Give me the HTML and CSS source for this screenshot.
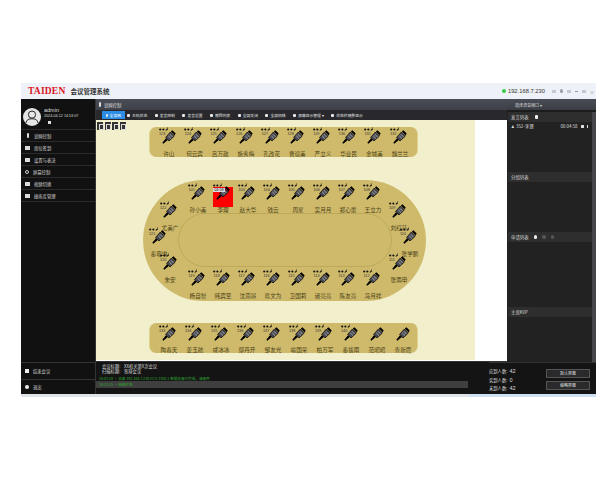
FILE: index.html
```html
<!DOCTYPE html>
<html lang="zh">
<head>
<meta charset="utf-8">
<title>会议管理系统</title>
<link rel="stylesheet" href="styles.css">
</head>
<body>
<svg class="defs" width="0" height="0">
  <defs>
    <g id="mic">
      <path d="M0.3 12.7 L4 8.2 L5.8 10 L1.3 13.7 Z" fill="#000"/>
      <path d="M3.6 7.4 L8.4 2 L12.4 6 L7 11 Z" fill="#4a4a52" stroke="#000" stroke-width="0.7"/>
      <path d="M8.8 1.6 L10.4 0.3 L13.7 3.6 L12.6 5.2 Z" fill="#000"/>
      <path d="M6.2 5.8 L9 8.6 M7.8 4.2 L10.6 7" stroke="#b8b8c0" stroke-width="0.8"/>
    </g>
    <g id="stat">
      <circle cx="1.3" cy="2.8" r="1.2" fill="#111"/>
      <circle cx="4.8" cy="2.8" r="1.2" fill="#111"/>
      <path d="M7 4 L9 1.5 L10 2.5 L8.5 4 Z M9 0.5 h0.8 v0.8 h-0.8 Z" fill="#111"/>
    </g>
  </defs>
</svg>
<div class="app">
  <header class="titlebar">
    <span class="brand">TAIDEN</span>
    <span class="apptitle">会议管理系统</span>
    <span class="spacer"></span>
    <span class="online"></span>
    <span class="ip">192.168.7.230</span>
    <span class="winctl"><i class="wi sq"></i><i class="wi dot"></i><i class="wi sq"></i><i class="wi dash"></i><i class="wi sq"></i><i class="wi x">×</i></span>
  </header>
  <div class="main">
    <aside class="sidebar">
      <div class="user">
        <svg class="avatar" viewBox="0 0 18 18" width="18" height="18">
          <circle cx="9" cy="9" r="9" fill="#e6e6e6"/>
          <circle cx="9" cy="6.6" r="3.6" fill="#e6e6e6" stroke="#111" stroke-width="0.9"/>
          <path d="M2.8 15.5 C3.5 11.5 6 10.8 9 10.8 C12 10.8 14.5 11.5 15.2 15.5" fill="none" stroke="#111" stroke-width="0.9"/>
        </svg>
        <div class="userinfo">
          <div class="uname">admin</div>
          <div class="utime">2024-04-12 14:53:07</div>
          <div class="ulock"></div>
        </div>
      </div>
      <nav class="menu">
        <div class="mi"><i class="mico narrow"></i>说网控制</div>
        <div class="mi"><i class="mico"></i>席位签到</div>
        <div class="mi"><i class="mico"></i>设置与表决</div>
        <div class="mi"><i class="mico round"></i>屏幕控制</div>
        <div class="mi"><i class="mico"></i>视频切换</div>
        <div class="mi"><i class="mico"></i>操练库管理</div>
      </nav>
      <div class="sidefoot">
        <div class="fi"><i class="fico"></i>结束会议</div>
        <div class="fi"><i class="fico round"></i>退出</div>
      </div>
    </aside>
    <div class="center">
      <div class="crumb"><i class="mico narrow"></i>说网控制</div>
      <div class="toolbar">
        <span class="tb active"><i class="ti"></i>全部图</span>
        <span class="tb"><i class="ti"></i>主机状态</span>
        <span class="tb"><i class="ti"></i>发言控制</span>
        <span class="tb"><i class="ti"></i>发言设置</span>
        <span class="tb"><i class="ti"></i>撤回列表</span>
        <span class="tb"><i class="ti"></i>全部关闭</span>
        <span class="tb"><i class="ti"></i>全部招核</span>
        <span class="tb"><i class="ti"></i>屏幕显示管理 ▾</span>
        <span class="tb"><i class="ti"></i>状态栏随影显示</span>
      </div>
      <div class="canvas">
        <div class="board">
          <div class="tools"><i></i><i></i><i></i><i></i></div>

          <div class="table table-top">
            <div class="seat"><svg class="st" viewBox="0 0 11 5"><use href="#stat"/></svg><span class="num">123</span><svg class="m" viewBox="0 0 14 14"><use href="#mic"/></svg><span class="nm">许山</span></div>
            <div class="seat"><svg class="st" viewBox="0 0 11 5"><use href="#stat"/></svg><span class="num">124</span><svg class="m" viewBox="0 0 14 14"><use href="#mic"/></svg><span class="nm">何云宾</span></div>
            <div class="seat"><svg class="st" viewBox="0 0 11 5"><use href="#stat"/></svg><span class="num">125</span><svg class="m" viewBox="0 0 14 14"><use href="#mic"/></svg><span class="nm">吕万政</span></div>
            <div class="seat"><svg class="st" viewBox="0 0 11 5"><use href="#stat"/></svg><span class="num">126</span><svg class="m" viewBox="0 0 14 14"><use href="#mic"/></svg><span class="nm">施秀梅</span></div>
            <div class="seat"><svg class="st" viewBox="0 0 11 5"><use href="#stat"/></svg><span class="num">127</span><svg class="m" viewBox="0 0 14 14"><use href="#mic"/></svg><span class="nm">孔改花</span></div>
            <div class="seat"><svg class="st" viewBox="0 0 11 5"><use href="#stat"/></svg><span class="num">128</span><svg class="m" viewBox="0 0 14 14"><use href="#mic"/></svg><span class="nm">曹谊美</span></div>
            <div class="seat"><svg class="st" viewBox="0 0 11 5"><use href="#stat"/></svg><span class="num">129</span><svg class="m" viewBox="0 0 14 14"><use href="#mic"/></svg><span class="nm">严立义</span></div>
            <div class="seat"><svg class="st" viewBox="0 0 11 5"><use href="#stat"/></svg><span class="num">130</span><svg class="m" viewBox="0 0 14 14"><use href="#mic"/></svg><span class="nm">华业民</span></div>
            <div class="seat"><svg class="st" viewBox="0 0 11 5"><use href="#stat"/></svg><span class="num">131</span><svg class="m" viewBox="0 0 14 14"><use href="#mic"/></svg><span class="nm">金城美</span></div>
            <div class="seat"><svg class="st" viewBox="0 0 11 5"><use href="#stat"/></svg><span class="num">132</span><svg class="m" viewBox="0 0 14 14"><use href="#mic"/></svg><span class="nm">魏兰兰</span></div>
          </div>

          <div class="oval">
            <div class="inner"></div>
            <div class="row">
              <div class="seat"><svg class="st" viewBox="0 0 11 5"><use href="#stat"/></svg><span class="num">101</span><svg class="m" viewBox="0 0 14 14"><use href="#mic"/></svg><span class="nm">孙小美</span></div>
              <div class="seat seat-on"><svg class="st" viewBox="0 0 11 5"><use href="#stat"/></svg><span class="num">102</span><svg class="m" viewBox="0 0 14 14"><use href="#mic"/></svg><span class="timer">04:58</span><span class="nm">李理</span></div>
              <div class="seat"><svg class="st" viewBox="0 0 11 5"><use href="#stat"/></svg><span class="num">103</span><svg class="m" viewBox="0 0 14 14"><use href="#mic"/></svg><span class="nm">赵大华</span></div>
              <div class="seat"><svg class="st" viewBox="0 0 11 5"><use href="#stat"/></svg><span class="num">104</span><svg class="m" viewBox="0 0 14 14"><use href="#mic"/></svg><span class="nm">钱云</span></div>
              <div class="seat"><svg class="st" viewBox="0 0 11 5"><use href="#stat"/></svg><span class="num">105</span><svg class="m" viewBox="0 0 14 14"><use href="#mic"/></svg><span class="nm">周星</span></div>
              <div class="seat"><svg class="st" viewBox="0 0 11 5"><use href="#stat"/></svg><span class="num">106</span><svg class="m" viewBox="0 0 14 14"><use href="#mic"/></svg><span class="nm">吴月月</span></div>
              <div class="seat"><svg class="st" viewBox="0 0 11 5"><use href="#stat"/></svg><span class="num">107</span><svg class="m" viewBox="0 0 14 14"><use href="#mic"/></svg><span class="nm">郑心蕾</span></div>
              <div class="seat"><svg class="st" viewBox="0 0 11 5"><use href="#stat"/></svg><span class="num">108</span><svg class="m" viewBox="0 0 14 14"><use href="#mic"/></svg><span class="nm">王立力</span></div>
            </div>
            <div class="row">
              <div class="seat"><svg class="st" viewBox="0 0 11 5"><use href="#stat"/></svg><span class="num">119</span><svg class="m" viewBox="0 0 14 14"><use href="#mic"/></svg><span class="nm">杨自智</span></div>
              <div class="seat"><svg class="st" viewBox="0 0 11 5"><use href="#stat"/></svg><span class="num">118</span><svg class="m" viewBox="0 0 14 14"><use href="#mic"/></svg><span class="nm">韩宾至</span></div>
              <div class="seat"><svg class="st" viewBox="0 0 11 5"><use href="#stat"/></svg><span class="num">117</span><svg class="m" viewBox="0 0 14 14"><use href="#mic"/></svg><span class="nm">沈南昂</span></div>
              <div class="seat"><svg class="st" viewBox="0 0 11 5"><use href="#stat"/></svg><span class="num">116</span><svg class="m" viewBox="0 0 14 14"><use href="#mic"/></svg><span class="nm">蒋文为</span></div>
              <div class="seat"><svg class="st" viewBox="0 0 11 5"><use href="#stat"/></svg><span class="num">115</span><svg class="m" viewBox="0 0 14 14"><use href="#mic"/></svg><span class="nm">卫国莉</span></div>
              <div class="seat"><svg class="st" viewBox="0 0 11 5"><use href="#stat"/></svg><span class="num">114</span><svg class="m" viewBox="0 0 14 14"><use href="#mic"/></svg><span class="nm">诸亮亮</span></div>
              <div class="seat"><svg class="st" viewBox="0 0 11 5"><use href="#stat"/></svg><span class="num">113</span><svg class="m" viewBox="0 0 14 14"><use href="#mic"/></svg><span class="nm">陈友亮</span></div>
              <div class="seat"><svg class="st" viewBox="0 0 11 5"><use href="#stat"/></svg><span class="num">112</span><svg class="m" viewBox="0 0 14 14"><use href="#mic"/></svg><span class="nm">冯月祥</span></div>
            </div>
          </div>

          <div class="seat free s122"><svg class="st" viewBox="0 0 11 5"><use href="#stat"/></svg><span class="num">122</span><svg class="m" viewBox="0 0 14 14"><use href="#mic"/></svg><span class="nm">尤美广</span></div>
          <div class="seat free s121"><svg class="st" viewBox="0 0 11 5"><use href="#stat"/></svg><span class="num">121</span><svg class="m" viewBox="0 0 14 14"><use href="#mic"/></svg><span class="nm">秦霉琳</span></div>
          <div class="seat free s120"><svg class="st" viewBox="0 0 11 5"><use href="#stat"/></svg><span class="num">120</span><svg class="m" viewBox="0 0 14 14"><use href="#mic"/></svg><span class="nm">朱安</span></div>
          <div class="seat free s109"><svg class="st" viewBox="0 0 11 5"><use href="#stat"/></svg><span class="num">109</span><svg class="m" viewBox="0 0 14 14"><use href="#mic"/></svg><span class="nm">刘红莎</span></div>
          <div class="seat free s110"><svg class="st" viewBox="0 0 11 5"><use href="#stat"/></svg><span class="num">110</span><svg class="m" viewBox="0 0 14 14"><use href="#mic"/></svg><span class="nm">张学鹏</span></div>
          <div class="seat free s111"><svg class="st" viewBox="0 0 11 5"><use href="#stat"/></svg><span class="num">111</span><svg class="m" viewBox="0 0 14 14"><use href="#mic"/></svg><span class="nm">张雨申</span></div>

          <div class="table table-bottom">
            <div class="seat"><svg class="st" viewBox="0 0 11 5"><use href="#stat"/></svg><span class="num">133</span><svg class="m" viewBox="0 0 14 14"><use href="#mic"/></svg><span class="nm">陶春天</span></div>
            <div class="seat"><svg class="st" viewBox="0 0 11 5"><use href="#stat"/></svg><span class="num">134</span><svg class="m" viewBox="0 0 14 14"><use href="#mic"/></svg><span class="nm">姜玉航</span></div>
            <div class="seat"><svg class="st" viewBox="0 0 11 5"><use href="#stat"/></svg><span class="num">135</span><svg class="m" viewBox="0 0 14 14"><use href="#mic"/></svg><span class="nm">咸冰冰</span></div>
            <div class="seat"><svg class="st" viewBox="0 0 11 5"><use href="#stat"/></svg><span class="num">136</span><svg class="m" viewBox="0 0 14 14"><use href="#mic"/></svg><span class="nm">鄢丹开</span></div>
            <div class="seat"><svg class="st" viewBox="0 0 11 5"><use href="#stat"/></svg><span class="num">137</span><svg class="m" viewBox="0 0 14 14"><use href="#mic"/></svg><span class="nm">邹友光</span></div>
            <div class="seat"><svg class="st" viewBox="0 0 11 5"><use href="#stat"/></svg><span class="num">138</span><svg class="m" viewBox="0 0 14 14"><use href="#mic"/></svg><span class="nm">喻国荣</span></div>
            <div class="seat"><svg class="st" viewBox="0 0 11 5"><use href="#stat"/></svg><span class="num">139</span><svg class="m" viewBox="0 0 14 14"><use href="#mic"/></svg><span class="nm">柏万军</span></div>
            <div class="seat"><svg class="st" viewBox="0 0 11 5"><use href="#stat"/></svg><span class="num">140</span><svg class="m" viewBox="0 0 14 14"><use href="#mic"/></svg><span class="nm">秦拔雨</span></div>
            <div class="seat"><span class="st blank"></span><span class="num"></span><svg class="m" viewBox="0 0 14 14"><use href="#mic"/></svg><span class="nm">范昭昭</span></div>
            <div class="seat"><span class="st blank"></span><span class="num"></span><svg class="m" viewBox="0 0 14 14"><use href="#mic"/></svg><span class="nm">查新霞</span></div>
          </div>
        </div>
      </div>
      <div class="info">
        <div class="meta"><b>会议标题:</b><span>XX机关第X次会议</span></div>
        <div class="meta"><b>扫描标题:</b><span>答辩会议</span></div>
        <div class="log">16:03:28 · 设备 192.168.7.230.HCS-3300.1 数据连接已完成，请使用</div>
        <div class="logbar">16:13:25 · 网络状态</div>
      </div>
    </div>
    <aside class="right">
      <div class="rtop">选择语音频口 ▾</div>
      <div class="rbody">
        <div class="panels">
          <section class="panel p-speak">
            <div class="ph">发言列表<i class="pdot square"></i></div>
            <div class="speaker"><span>♟ 352-李理</span><span class="sp"></span><span>00:04:58</span><i class="sico"></i><i class="sico thin"></i></div>
          </section>
          <section class="panel p-group"><div class="ph">分组列表</div></section>
          <section class="panel p-apply"><div class="ph">申请列表<i class="pdot"></i><i class="pdot dim"></i><i class="pdot dim"></i></div></section>
          <section class="panel p-kvp"><div class="ph">主席KVP</div></section>
        </div>
        <div class="scroll"></div>
      </div>
      <div class="stats">
        <div class="counts">
          <div><span>应到人数:</span><b>42</b></div>
          <div><span>实到人数:</span><b>0</b></div>
          <div><span>未到人数:</span><b>42</b></div>
        </div>
      </div>
    </aside>
  </div>
  <div class="buttons">
    <span class="btn">默认屏幕</span>
    <span class="btn">缩略屏幕</span>
  </div>
  <div class="taskstrip"></div>
</div>
</body>
</html>
```

FILE: styles.css
```css
* { box-sizing: border-box; }
html, body { margin: 0; background: #fff; }
body { font-family: "Noto Sans CJK SC", "Liberation Sans", sans-serif; }
i { display: block; font-style: normal; }
.defs { position: absolute; }

.app { position: relative; width: 575px; height: 314px; margin: 83px 0 0 21px; display: flex; flex-direction: column; }

.titlebar { height: 16px; background: #eef1f7; display: flex; align-items: center; padding: 0 3px 0 7px; }
.brand { font: bold 9.5px "Liberation Serif", serif; color: #d9161e; letter-spacing: 0.2px; }
.apptitle { font-size: 6.5px; font-weight: 700; color: #333; margin-left: 5px; }
.spacer { flex: 1; }
.online { width: 4px; height: 4px; border-radius: 50%; background: #35c94a; }
.ip { font: 5.8px "Liberation Sans", sans-serif; color: #333; margin-left: 2px; }
.winctl { display: flex; align-items: center; gap: 4px; margin-left: 7px; }
.wi { width: 3.5px; height: 3px; background: #c3c8d2; }
.wi.dot { border-radius: 50%; height: 3.5px; background: #9aa0ab; }
.wi.dash { height: 1px; background: #999; }
.wi.x { background: none; font-size: 5px; line-height: 3px; color: #888; }

.main { flex: 1; display: flex; min-height: 0; }

.sidebar { width: 75px; background: #111; display: flex; flex-direction: column; border-right: 1px solid #333; }
.user { height: 31px; display: flex; align-items: center; padding: 5px 0 0 2px; gap: 3px; border-bottom: 1px solid #2b2b2b; }
.avatar { flex: none; }
.userinfo { color: #ddd; font: 3.7px "Liberation Sans", sans-serif; margin-top: -3px; }
.uname { font-size: 5.5px; margin-bottom: 1px; }
.ulock { width: 3px; height: 3px; background: #ddd; margin: 3px 0 0 4px; }
.menu { flex: 1; }
.mi { height: 12px; display: flex; align-items: center; gap: 4px; padding-left: 4px; font-size: 4.3px; color: #d4d4d4; border-bottom: 1px solid #2b2b2b; }
.mico { width: 5px; height: 4px; background: #ddd; flex: none; }
.mico.narrow { width: 2px; height: 5px; margin: 0 1.5px; border-radius: 1px; }
.mico.round { border-radius: 50%; width: 4px; background: none; border: 1px solid #ccc; }
.sidefoot { height: 32px; border-top: 1px solid #333; }
.fi { height: 15.5px; display: flex; align-items: center; gap: 4px; padding-left: 4px; font-size: 4.3px; color: #d4d4d4; }
.fi + .fi { border-top: 1px solid #333; }
.fico { width: 4px; height: 4px; background: #eee; }
.fico.round { border-radius: 50%; }

.center { width: 411px; display: flex; flex-direction: column; background: #141414; }
.crumb { height: 11px; background: linear-gradient(#4a4d55, #3e4149); display: flex; align-items: center; gap: 2px; padding-left: 1px; font-size: 4.3px; color: #ddd; }
.toolbar { height: 10px; background: #29292d; display: flex; align-items: center; gap: 7.5px; padding-left: 6px; font-size: 3.8px; color: #e4e4e4; white-space: nowrap; }
.tb { display: flex; align-items: center; gap: 2px; height: 8px; padding: 0; }
.tb.active { background: #2b8de6; color: #fff; padding: 0 4px; width: 23px; margin-right: -5.5px; }
.ti { width: 3px; height: 3px; background: #e8e8e8; border-radius: 1px; }

.canvas { height: 241px; background: #fff; flex: none; }
.board { position: relative; width: 379px; height: 240px; background: #f1efcc; }
.tools { position: absolute; left: 1px; top: 2px; display: flex; gap: 1.5px; }
.tools i { width: 6px; height: 7.5px; background: #333; padding: 2px 1.5px; }
.tools i::before { content: ""; display: block; width: 3px; height: 3.5px; border: 1px solid #ddd; }

.table { position: absolute; left: 53px; width: 269px; height: 30px; display: flex; padding-left: 6px; background: #cfba6b; border: 1px solid #dfd08d; border-top-width: 0; border-bottom-width: 0; border-radius: 7px; }
.table-top { top: 7px; }
.table-top .seat { width: 25.7px; }
.table-bottom { top: 203px; padding-top: 1px; }
.table-bottom .seat { width: 26px; }
.table-bottom .seat .nm { margin-top: 13.5px; }

.oval { position: absolute; left: 47px; top: 60px; width: 283px; height: 121px; background: #cfba6b; border-radius: 60.5px; display: flex; flex-direction: column; justify-content: space-between; padding: 3px 0 2px 42.5px; }
.inner { position: absolute; left: 35px; top: 33px; width: 214px; height: 54px; border: 1px solid #bca95a; border-radius: 27px; }
.row { display: flex; }

.seat { position: relative; width: 25px; height: 30px; flex: none; display: flex; flex-direction: column; }
.st { display: block; width: 10px; height: 4.5px; margin-left: 2.5px; flex: none; }
.st.blank { visibility: hidden; }
.num { height: 4.5px; font: 3.8px/4.5px "Liberation Sans", sans-serif; color: #333; margin-left: 3px; flex: none; }
.m { position: absolute; left: calc(50% - 7px); top: 3px; width: 14px; height: 14px; }
.seat .nm { margin-top: 14.5px; height: 7px; text-align: center; font-size: 5.6px; line-height: 7px; color: #4c4216; white-space: nowrap; flex: none; position: relative; }

.seat-on::before { content: ""; position: absolute; left: 2.5px; top: 4px; width: 20px; height: 20px; background: #f00; }
.seat-on .st { position: relative; }
.timer { position: absolute; left: 2.5px; top: 5px; width: 12px; height: 4px; background: #d8d8de; color: #222; font: 3.8px/4px "Liberation Sans", sans-serif; text-align: center; }
.seat-on .num { visibility: hidden; }

.free { position: absolute; width: 26px; }
.s122 { left: 61px; top: 81px; }
.s121 { left: 50px; top: 107px; }
.s120 { left: 61px; top: 133px; }
.s109 { left: 290px; top: 81px; }
.s110 { left: 301px; top: 107px; }
.s111 { left: 290px; top: 133px; }

.info { flex: 1; padding-top: 2px; background: #141414; border-top: 1px solid #333; color: #ddd; font-size: 4.3px; }
.meta { height: 5px; line-height: 5px; padding-left: 6px; display: flex; white-space: nowrap; }
.meta b { font-weight: 400; width: 22px; flex: none; }
.log { margin-top: 2px; height: 5px; line-height: 5px; padding-left: 3px; font-size: 3.6px; color: #2ea52e; white-space: nowrap; }
.logbar { height: 7px; line-height: 7px; width: 372px; padding-left: 3px; background: #3f3f3f; font-size: 3.6px; color: #2ea52e; }

.right { width: 89px; display: flex; flex-direction: column; background: #222; }
.rtop { height: 13px; background: linear-gradient(#4a4d55, #3a3d44); font-size: 4px; color: #ddd; padding: 2px 0 0 8px; border-bottom: 2px solid #1c1c1c; line-height: 9px; }
.rbody { height: 250px; display: flex; flex: none; }
.panels { flex: 1; display: flex; flex-direction: column; padding-left: 1px; }
.panel { background: #222; }
.p-speak { height: 60px; }
.p-group { height: 60px; }
.p-apply { height: 75px; }
.p-kvp { height: 55px; }
.ph { height: 10px; background: #2e2e2e; font-size: 4.4px; color: #d8d8d8; display: flex; align-items: center; padding-left: 3px; gap: 5px; }
.pdot { width: 3.5px; height: 3.5px; border-radius: 50%; background: #eee; }
.pdot.square { border-radius: 1px; margin-left: 1px; }
.pdot.dim { background: #555; }
.speaker { display: flex; align-items: center; gap: 2px; height: 8px; padding: 0 4px 0 3px; font-size: 4.4px; color: #ddd; }
.sp { flex: 1; }
.sico { width: 3px; height: 3px; background: #ddd; margin-left: 1px; }
.sico.thin { width: 1.5px; }
.scroll { width: 4px; background: #45454a; }
.stats { flex: 1; display: flex; background: #141414; border-top: 1px solid #333; margin-left: -18px; padding-top: 4px; }
.counts { font-size: 4.3px; color: #ddd; }
.counts div { height: 8.5px; line-height: 8.5px; display: flex; gap: 2px; white-space: nowrap; }
.counts b { font: 5.5px/8.5px "Liberation Sans", sans-serif; }

.buttons { position: absolute; left: 525px; top: 286px; display: flex; flex-direction: column; gap: 3px; }
.btn { width: 44px; height: 9px; background: #2a2a2c; border: 1px solid #555; color: #ddd; font-size: 4px; line-height: 7px; text-align: center; }

.taskstrip { height: 3px; flex: none; background: linear-gradient(90deg, #dfe4ea 0 78%, #cfe0f2 78% 100%); }
```
